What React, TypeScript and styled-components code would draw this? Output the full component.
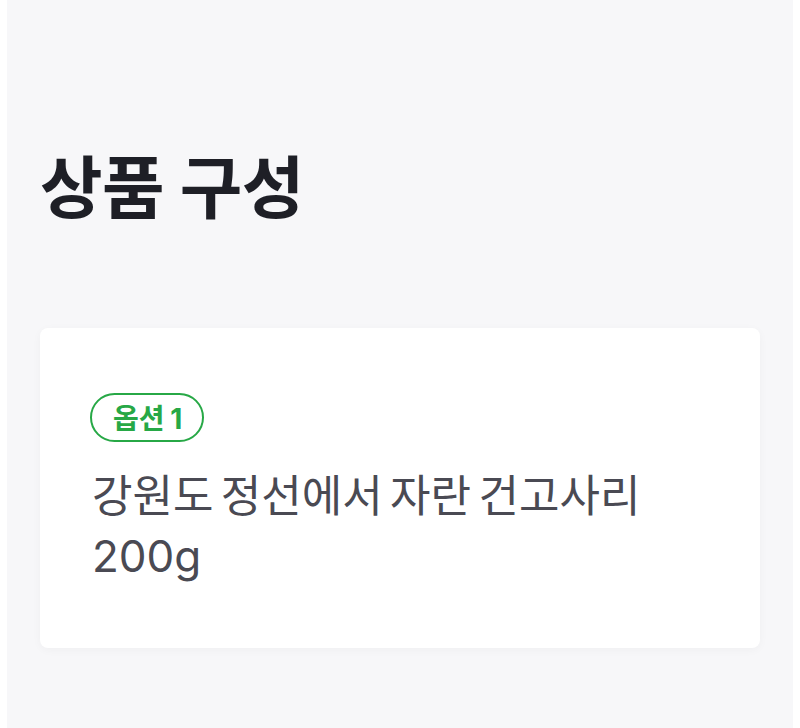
import React from "react";
import styled, { createGlobalStyle } from "styled-components";

const GlobalStyle = createGlobalStyle`
  html, body {
    margin: 0;
    padding: 0;
    background: #ffffff;
  }
  body {
    font-family: Inter, "Noto Sans CJK KR", sans-serif;
    font-feature-settings: "palt";
  }
`;

const Page = styled.div`
  margin: 0 7px;
  min-height: 728px;
  background: #f7f7f9;
  padding: 148px 33px 80px;
  box-sizing: border-box;
`;

const Title = styled.h1`
  margin: 0;
  font-size: 68px;
  line-height: 1.2;
  font-weight: 700;
  color: #1e1f26;
  letter-spacing: -0.5px;
`;

const Card = styled.section`
  margin-top: 98px;
  background: #ffffff;
  border-radius: 8px;
  box-shadow: 0 2px 10px rgba(0, 0, 0, 0.035);
  padding: 65px 52px 62px;
  display: flex;
  flex-direction: column;
  align-items: flex-start;
  gap: 24px;
`;

const Badge = styled.span`
  display: inline-flex;
  align-items: center;
  justify-content: center;
  height: 49px;
  box-sizing: border-box;
  padding: 0 20px 0 21px;
  margin-left: -2px;
  border: 2px solid #27a846;
  border-radius: 999px;
  color: #27a846;
  font-size: 28px;
  font-weight: 700;
  word-spacing: -1px;
`;

const Desc = styled.p`
  margin: 0;
  font-size: 44px;
  line-height: 60px;
  font-weight: 400;
  color: #4a4a53;
  word-spacing: -5px;
`;

export default function App() {
  return (
    <>
      <GlobalStyle />
      <Page>
        <Title>상품 구성</Title>
        <Card>
          <Badge>옵션 1</Badge>
          <Desc>강원도 정선에서 자란 건고사리 200g</Desc>
        </Card>
      </Page>
    </>
  );
}
